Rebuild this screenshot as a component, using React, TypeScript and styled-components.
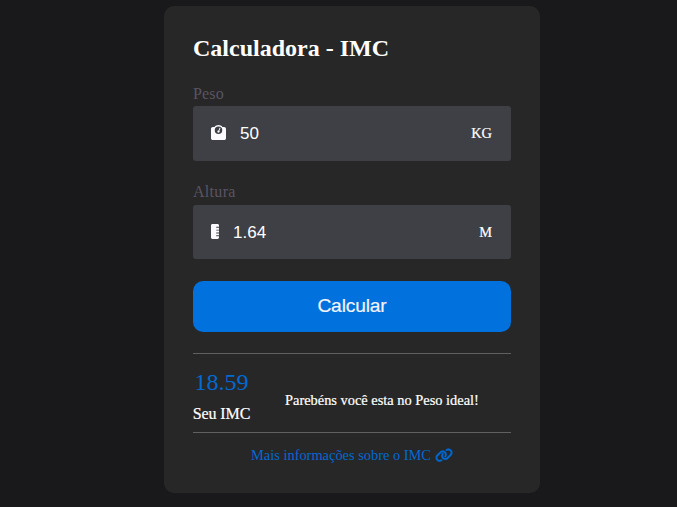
import React from "react";
import styled, { createGlobalStyle } from "styled-components";
import { FaRulerVertical, FaWeightScale } from "react-icons/fa6";

const GlobalStyle = createGlobalStyle`
  * { box-sizing: border-box; margin: 0; padding: 0; }
  body { background: #19191b; font-family: "Liberation Serif", "Times New Roman", serif; color: #fff; }
`;

const Page = styled.main`
  height: 507px;
  padding: 6px 0 0 164px;
  overflow: hidden;
`;

const Card = styled.section`
  display: flex;
  flex-direction: column;
  width: 376px;
  height: 487px;
  padding: 28px 29px 0;
  border-radius: 10px;
  background: #272727;
`;

const Title = styled.h1`
  height: 28px;
  font-size: 24px;
  line-height: 28px;
  white-space: nowrap;
`;

const Field = styled.div<{ $gap: number }>`
  display: flex;
  flex-direction: column;
  margin-top: ${(p) => p.$gap}px;
`;

const Label = styled.label<{ $height: number; $spacing: number }>`
  height: ${(p) => p.$height}px;
  font-size: 16px;
  line-height: 20px;
  letter-spacing: ${(p) => p.$spacing}px;
  color: #5a5462;
`;

const InputBox = styled.div<{ $height: number }>`
  display: flex;
  align-items: center;
  height: ${(p) => p.$height}px;
  padding: 0 19px 0 18px;
  border-radius: 3px;
  background: #3f4045;
`;

const IconSlot = styled.span<{ $width: number; $lift: number }>`
  display: flex;
  flex: none;
  width: ${(p) => p.$width}px;
  height: 15px;
  margin-bottom: ${(p) => p.$lift}px;
  color: #fafaff;

  svg {
    width: 100%;
    height: 100%;
  }
`;

const Input = styled.input<{ $drop?: number }>`
  flex: 1;
  min-width: 0;
  height: 20px;
  margin-top: ${(p) => p.$drop ?? 0}px;
  margin-left: 14px;
  border: 0;
  outline: 0;
  background: transparent;
  color: #fff;
  font: 17px/20px "Liberation Sans", Arial, sans-serif;
`;

const Unit = styled.span`
  font-size: 14.4px;
  -webkit-text-stroke: 0.2px;
`;

const Button = styled.button`
  flex: none;
  height: 51px;
  margin-top: 22px;
  padding-bottom: 2px;
  border: 0;
  border-radius: 10px;
  background: #0071dd;
  color: #f3f4f8;
  font: 19.2px "Liberation Sans", Arial, sans-serif;
  letter-spacing: -0.15px;
  -webkit-text-stroke: 0.2px;
`;

const Result = styled.div`
  display: flex;
  height: 80px;
  margin-top: 21px;
  border-top: 1px solid #606060;
  border-bottom: 1px solid #606060;
`;

const Score = styled.div`
  display: flex;
  flex-direction: column;
  align-items: center;
  width: 57px;
  padding-top: 14px;
  white-space: nowrap;
`;

const Value = styled.strong`
  font-size: 24px;
  font-weight: 400;
  line-height: 28px;
  color: #006ad2;
`;

const Caption = styled.span`
  margin-top: 9px;
  font-size: 16px;
  line-height: 18px;
  letter-spacing: -0.1px;
  -webkit-text-stroke: 0.2px;
`;

const Message = styled.p`
  padding: 38px 0 0 35px;
  font-size: 14.4px;
  line-height: 16px;
  white-space: nowrap;
  -webkit-text-stroke: 0.2px;
`;

const InfoLink = styled.a`
  display: flex;
  align-items: center;
  justify-content: center;
  gap: 4px;
  margin-top: 13px;
  font-size: 14.4px;
  line-height: 18px;
  color: #006ad2;
`;

const ChainIcon = styled.svg`
  width: 18px;
  height: 14.4px;
  fill: currentColor;
  stroke: currentColor;
  stroke-width: 8px;
`;

export default function App() {
  return (
    <Page>
      <GlobalStyle />
      <Card>
        <Title>Calculadora - IMC</Title>
        <Field $gap={22}>
          <Label htmlFor="peso" $height={22} $spacing={0.15}>Peso</Label>
          <InputBox $height={55}>
            <IconSlot $width={15} $lift={2}>
              <FaWeightScale />
            </IconSlot>
            <Input id="peso" defaultValue="50" />
            <Unit>KG</Unit>
          </InputBox>
        </Field>
        <Field $gap={21}>
          <Label htmlFor="altura" $height={23} $spacing={0.3}>Altura</Label>
          <InputBox $height={54}>
            <IconSlot $width={8} $lift={1}>
              <FaRulerVertical preserveAspectRatio="none" />
            </IconSlot>
            <Input id="altura" defaultValue="1.64" $drop={2} />
            <Unit>M</Unit>
          </InputBox>
        </Field>
        <Button type="button">Calcular</Button>
        <Result>
          <Score>
            <Value>18.59</Value>
            <Caption>Seu IMC</Caption>
          </Score>
          <Message>Parebéns você esta no Peso ideal!</Message>
        </Result>
        <InfoLink>
          Mais informações sobre o IMC
          <ChainIcon viewBox="0 0 640 512" aria-hidden="true">
            <path d="M579.8 267.7c56.5-56.5 56.5-148 0-204.5c-50-50-128.8-56.5-186.3-15.4l-1.6 1.1c-14.4 10.3-17.7 30.3-7.4 44.6s30.3 17.7 44.6 7.4l1.6-1.1c32.1-22.9 76-19.3 103.8 8.6c31.5 31.5 31.5 82.5 0 114L422.3 334.8c-31.5 31.5-82.5 31.5-114 0c-27.9-27.9-31.5-71.8-8.6-103.8l1.1-1.6c10.3-14.4 6.9-34.4-7.4-44.6s-34.4-6.9-44.6 7.4l-1.1 1.6C206.5 251.2 213 330 263 380c56.5 56.5 148 56.5 204.5 0L579.8 267.7z" />
            <path d="M60.2 244.3c-56.5 56.5-56.5 148 0 204.5c50 50 128.8 56.5 186.3 15.4l1.6-1.1c14.4-10.3 17.7-30.3 7.4-44.6s-30.3-17.7-44.6-7.4l-1.6 1.1c-32.1 22.9-76 19.3-103.8-8.6C74 372 74 321 105.5 289.5L217.7 177.2c31.5-31.5 82.5-31.5 114 0c27.9 27.9 31.5 71.8 8.6 103.9l-1.1 1.6c-10.3 14.4-6.9 34.4 7.4 44.6s34.4 6.9 44.6-7.4l1.1-1.6C433.5 260.8 427 182 377 132c-56.5-56.5-148-56.5-204.5 0L60.2 244.3z" />
          </ChainIcon>
        </InfoLink>
      </Card>
    </Page>
  );
}
